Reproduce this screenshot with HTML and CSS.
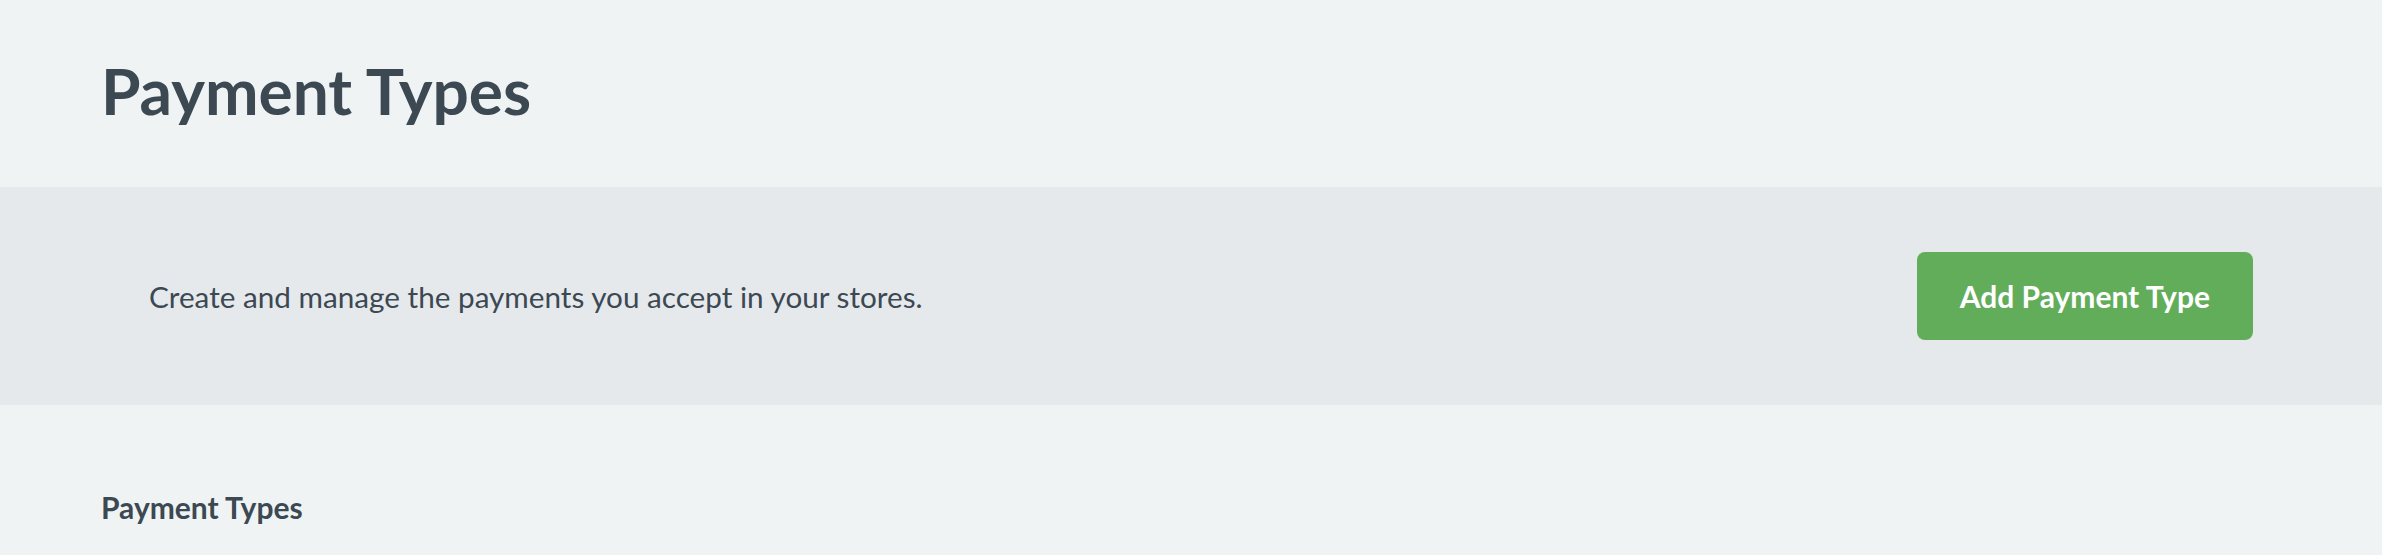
FILE: index.html
```html
<!DOCTYPE html>
<html lang="en">
<head>
    <meta charset="UTF-8">
    <meta name="viewport" content="width=device-width, initial-scale=1.0">
    <title>Payment Types</title>
    <link rel="stylesheet" href="styles.css">
</head>
<body>
    <header class="page-header">
        <h1 class="page-title">Payment Types</h1>
    </header>

    <section class="intro-band">
        <p class="intro-text">Create and manage the payments you accept in your stores.</p>
        <button type="button" class="btn-add">Add Payment Type</button>
    </section>

    <main class="content">
        <h2 class="section-title">Payment Types</h2>
    </main>
</body>
</html>
```

FILE: styles.css
```css
body {
    margin: 0;
    font-family: Lato, "Open Sans", sans-serif;
    background-color: #eff3f4;
    color: #3c4852;
}
.page-header {
    height: 187px;
    box-sizing: border-box;
    padding: 53px 0 0 101px;
}
.page-title {
    margin: 0;
    font-size: 64px;
    line-height: 1.2;
    font-weight: 700;
}
.intro-band {
    display: flex;
    align-items: center;
    justify-content: space-between;
    height: 218px;
    box-sizing: border-box;
    padding: 0 129px 0 149px;
    background-color: #e5e9ec;
}
.intro-text {
    margin: 0;
    font-size: 29.7px;
}
.btn-add {
    height: 88px;
    padding: 0 43px;
    background-color: #62ad5a;
    color: #fff;
    border: none;
    border-radius: 8px;
    font-family: inherit;
    font-size: 30px;
    font-weight: 700;
    cursor: pointer;
}
.content {
    padding: 84px 0 0 101px;
}
.section-title {
    margin: 0;
    font-size: 30px;
    line-height: 1.2;
    font-weight: 700;
}
```
